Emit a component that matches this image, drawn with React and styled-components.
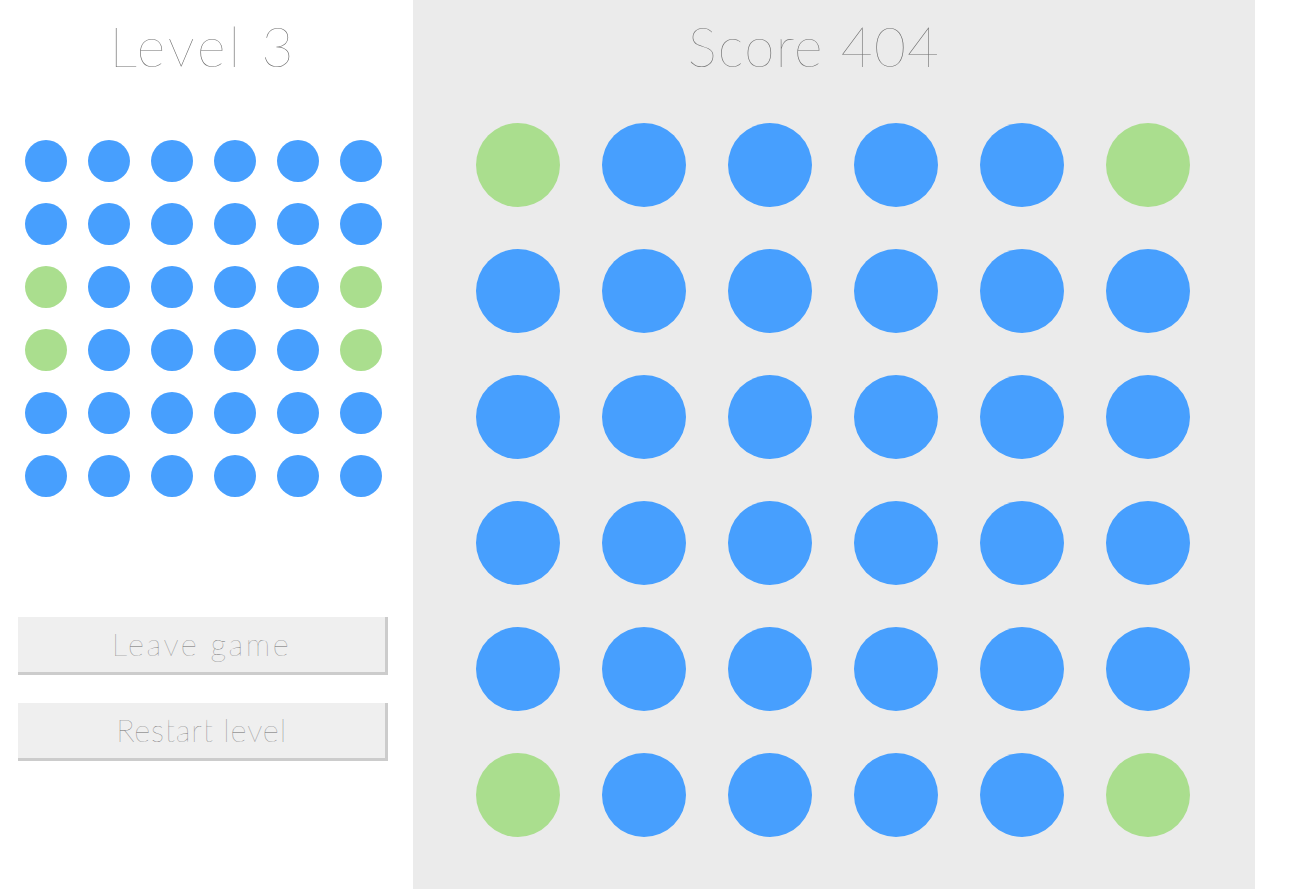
import React from "react";
import styled, { createGlobalStyle } from "styled-components";

const GlobalStyle = createGlobalStyle`
  html, body {
    margin: 0;
    padding: 0;
    background: #fff;
    font-family: Lato, "Open Sans", sans-serif;
  }
`;

const Page = styled.div`
  display: flex;
  flex-direction: row;
  width: 100%;
  height: 889px;
  overflow: hidden;
`;

const SidePanel = styled.div`
  width: 370px;
  padding: 0 25px 0 18px;
  display: flex;
  flex-direction: column;
  align-items: stretch;
`;

const Title = styled.h1`
  margin: 0;
  padding-top: 19px;
  font-weight: 100;
  font-size: 55px;
  line-height: 1;
  color: #6f6f6f;
  text-align: center;
  letter-spacing: ${(p) => p.spacing || 2}px;
`;

const Board = styled.div`
  display: grid;
  grid-template-columns: repeat(6, ${(p) => p.size}px);
  grid-auto-rows: ${(p) => p.size}px;
  gap: ${(p) => p.gap}px;
  justify-content: center;
`;

const Dot = styled.div`
  border-radius: 50%;
  background: ${(p) => (p.green ? "#aade8e" : "#479ffe")};
`;

const SmallBoard = styled(Board)`
  margin-top: 66px;
`;

const Buttons = styled.div`
  margin-top: 120px;
  display: flex;
  flex-direction: column;
  gap: 28px;
`;

const Button = styled.button`
  height: 58px;
  box-sizing: border-box;
  background: #efefef;
  border: none;
  border-right: 3px solid #cccccc;
  border-bottom: 3px solid #cccccc;
  font-family: Lato, "Open Sans", sans-serif;
  font-weight: 100;
  font-size: 31px;
  color: #6a6a6a;
  letter-spacing: ${(p) => p.spacing}px;
  cursor: pointer;
  padding: 0 0 2px 0;
`;

const MainPanel = styled.div`
  width: 842px;
  background: #ebebeb;
  display: flex;
  flex-direction: column;
`;

const MainTitle = styled(Title)`
  padding-right: 40px;
`;

const BigBoard = styled(Board)`
  margin-top: 49px;
  padding-right: 2px;
`;

const smallGreens = [12, 17, 18, 23];
const bigGreens = [0, 5, 30, 35];

function Grid({ as: Comp, size, gap, greens }) {
  return (
    <Comp size={size} gap={gap}>
      {Array.from({ length: 36 }, (_, i) => (
        <Dot key={i} green={greens.includes(i)} />
      ))}
    </Comp>
  );
}

export default function App() {
  return (
    <>
      <GlobalStyle />
      <Page>
        <SidePanel>
          <Title spacing={3}>Level 3</Title>
          <Grid as={SmallBoard} size={42} gap={21} greens={smallGreens} />
          <Buttons>
            <Button spacing={2.5}>Leave game</Button>
            <Button spacing={0.8}>Restart level</Button>
          </Buttons>
        </SidePanel>
        <MainPanel>
          <MainTitle spacing={1.3}>Score 404</MainTitle>
          <Grid as={BigBoard} size={84} gap={42} greens={bigGreens} />
        </MainPanel>
      </Page>
    </>
  );
}
